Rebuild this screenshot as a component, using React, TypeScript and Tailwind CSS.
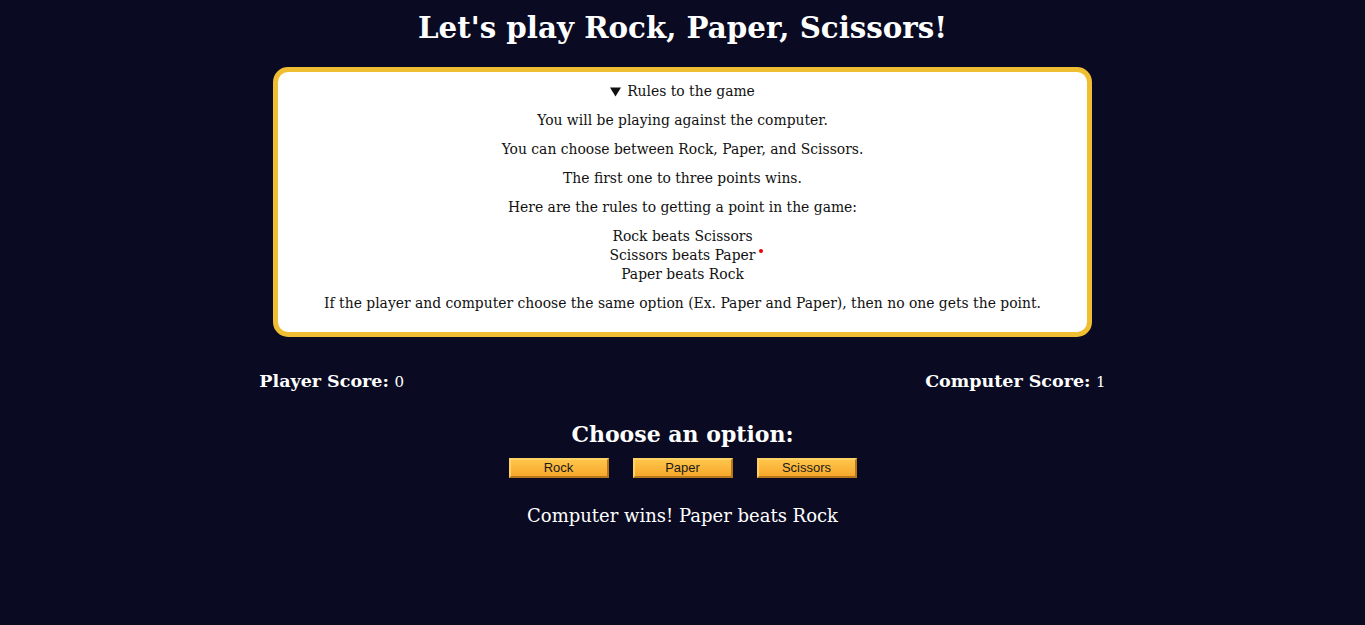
const rules = ['Rock beats Scissors', 'Scissors beats Paper', 'Paper beats Rock']

const intro = [
  'You will be playing against the computer.',
  'You can choose between Rock, Paper, and Scissors.',
  'The first one to three points wins.',
  'Here are the rules to getting a point in the game:',
]

const options = ['Rock', 'Paper', 'Scissors']

export default function App() {
  return (
    <div className="min-h-screen bg-[#0a0b22] font-['DejaVu_Serif',Georgia,serif] text-white">
      <h1 className="pt-[10px] text-center text-[29.3px] font-bold leading-[36px]">
        Let's play Rock, Paper, Scissors!
      </h1>

      <div className="mx-auto mt-[21px] w-[60%] rounded-[15px] border-[5px] border-[#f0be33] bg-white px-4 pb-[19px] pt-[10px] text-center text-[13.9px] leading-[19px] text-[#111]">
        <div className="flex flex-col gap-[10px]">
          <div className="flex items-center justify-center gap-[6px]">
            <svg width="11" height="10" viewBox="0 0 11 10" className="mt-[1px]">
              <path d="M0 0.5 L11 0.5 L5.5 9.5 Z" fill="#111" />
            </svg>
            <span>Rules to the game</span>
          </div>
          {intro.map((line) => (
            <p key={line}>{line}</p>
          ))}
          <div>
            {rules.map((r, i) => (
              <div key={r}>
                <span className="relative">
                  {r}
                  {i === 1 ? (
                    <span className="absolute right-[-8px] top-[2px] h-[4px] w-[4px] rounded-full bg-[#e00]" />
                  ) : null}
                </span>
              </div>
            ))}
          </div>
          <p>
            If the player and computer choose the same option (Ex. Paper and
            Paper), then no one gets the point.
          </p>
        </div>
      </div>

      <div className="mx-auto mt-[33px] flex w-[62%] items-center justify-between text-[17.5px] leading-[22px]">
        <div>
          <span className="font-bold">Player Score:</span>{' '}
          <span className="text-[15px]">0</span>
        </div>
        <div>
          <span className="font-bold">Computer Score:</span>{' '}
          <span className="text-[15px]">1</span>
        </div>
      </div>

      <h2 className="mt-[27px] text-center text-[22px] font-bold leading-[28px]">
        Choose an option:
      </h2>
      <div className="mt-[10px] flex justify-center gap-[24px]">
        {options.map((o) => (
          <button
            key={o}
            type="button"
            className="h-[20px] w-[100px] border-2 border-b-[#b8761c] border-l-[#ffd266] border-r-[#b8761c] border-t-[#ffd266] bg-gradient-to-b from-[#ffc54a] to-[#f6a82a] font-['Liberation_Sans',Arial,sans-serif] text-[13px] leading-[16px] text-[#1a1a1a]"
          >
            {o}
          </button>
        ))}
      </div>

      <p className="mt-[26px] text-center text-[18px] leading-[24px]">
        Computer wins! Paper beats Rock
      </p>
    </div>
  )
}
